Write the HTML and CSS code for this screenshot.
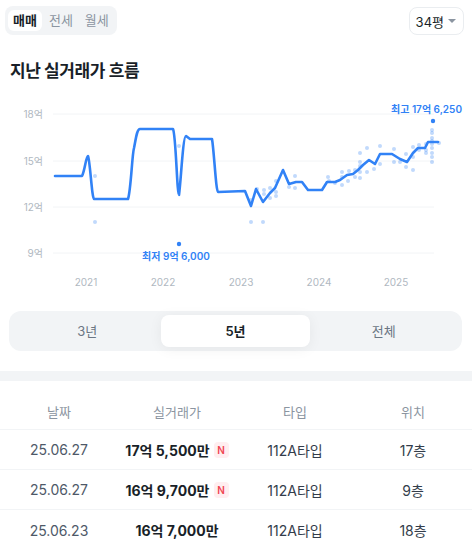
FILE: index.html
```html
<!DOCTYPE html>
<html>
	<head>
		<meta charset="utf-8">
		<title>실거래가</title>
		<link rel="stylesheet" href="styles.css">
	</head>
	<body>
		<div class="top">
			<div class="tabs">
				<span class="tab on">매매</span>
				<span class="tab">전세</span>
				<span class="tab">월세</span>
			</div>
			<div class="size">34평 <i class="caret"></i></div>
		</div>

		<h2 class="title">지난 실거래가 흐름</h2>

		<svg class="chart" width="472" height="200" viewBox="0 95 472 200">
			<g stroke="#f2f4f6" stroke-width="1">
				<line x1="53" y1="114" x2="434" y2="114"/>
				<line x1="53" y1="161" x2="434" y2="161"/>
				<line x1="53" y1="207" x2="434" y2="207"/>
				<line x1="53" y1="253" x2="434" y2="253"/>
			</g>
			<g class="ylab" text-anchor="end">
				<text x="43" y="118">18억</text>
				<text x="43" y="165">15억</text>
				<text x="43" y="211">12억</text>
				<text x="43" y="257">9억</text>
			</g>
			<g class="xlab" text-anchor="middle">
				<text x="86" y="286">2021</text>
				<text x="163" y="286">2022</text>
				<text x="241" y="286">2023</text>
				<text x="319" y="286">2024</text>
				<text x="396" y="286">2025</text>
			</g>
			<g fill="#3182f6" fill-opacity="0.3">
				<circle cx="95" cy="176" r="2"/><circle cx="95" cy="222" r="2"/><circle cx="179" cy="146" r="2"/>
				<circle cx="251" cy="222" r="2"/><circle cx="263" cy="222" r="2"/><circle cx="251" cy="200" r="2"/>
				<circle cx="257" cy="189" r="2"/><circle cx="264" cy="190" r="2"/><circle cx="264" cy="194" r="2"/>
				<circle cx="270" cy="188" r="2"/><circle cx="270" cy="198" r="2"/><circle cx="276" cy="181" r="2"/>
				<circle cx="276" cy="192" r="2"/><circle cx="276" cy="196" r="2"/><circle cx="289" cy="187" r="2"/>
				<circle cx="295" cy="176" r="2"/><circle cx="295" cy="188" r="2"/><circle cx="328" cy="177" r="2"/>
				<circle cx="329" cy="181" r="2"/><circle cx="335" cy="183" r="2"/><circle cx="342" cy="172" r="2"/>
				<circle cx="342" cy="177" r="2"/><circle cx="342" cy="185" r="2"/><circle cx="348" cy="181" r="2"/>
				<circle cx="349" cy="171" r="2"/><circle cx="355" cy="170" r="2"/><circle cx="355" cy="177" r="2"/>
				<circle cx="360" cy="153" r="2"/><circle cx="360" cy="162" r="2"/><circle cx="360" cy="166" r="2"/>
				<circle cx="360" cy="172" r="2"/><circle cx="360" cy="178" r="2"/><circle cx="367" cy="148" r="2"/>
				<circle cx="367" cy="172" r="2"/><circle cx="374" cy="169" r="2"/><circle cx="380" cy="146" r="2"/>
				<circle cx="380" cy="164" r="2"/><circle cx="394" cy="149" r="2"/><circle cx="394" cy="162" r="2"/>
				<circle cx="400" cy="162" r="2"/><circle cx="406" cy="154" r="2"/><circle cx="406" cy="167" r="2"/>
				<circle cx="413" cy="147" r="2"/><circle cx="413" cy="157" r="2"/><circle cx="413" cy="170" r="2"/>
				<circle cx="419" cy="145" r="2"/><circle cx="419" cy="150" r="2"/><circle cx="426" cy="144" r="2"/>
				<circle cx="426" cy="150" r="2"/><circle cx="426" cy="153" r="2"/><circle cx="432" cy="130" r="2"/>
				<circle cx="432" cy="133" r="2"/><circle cx="432" cy="138" r="2"/><circle cx="432" cy="141" r="2"/>
				<circle cx="432" cy="144" r="2"/><circle cx="432" cy="148" r="2"/><circle cx="432" cy="153" r="2"/>
				<circle cx="432" cy="157" r="2"/><circle cx="432" cy="162" r="2"/><circle cx="439" cy="143" r="2"/>
			</g>
			<path fill="none" stroke="#3182f6" stroke-width="2.6" stroke-linejoin="round" stroke-linecap="round"
				d="M55,176 L82,176 C85,170 86,156 88,156 C90,160 92,199 94,199 L128,199 C131,190 132,155 134,148 C136,138 137,129 140,129 L173,129 C176,135 177,195 179,195 C181,180 183,136 186,136 L190,139 L212,139 C214,150 216,192 218,192 L245,191 L251,206 L256,189 L263,202 L270,193 L275,188 L283,170 L289,184 L296,182 L302,182 L308,190 L322,190 L327,182 L335,182 L340,180 L347,175 L353,174 L358,170 L363,165 L369,160 L375,164 L380,154 L392,154 L400,159 L407,162 L413,153 L418,148 L425,148 L428,142 L438,142"/>
			<circle cx="179" cy="244" r="2.2" fill="#3182f6"/>
			<circle cx="433" cy="121" r="2.2" fill="#3182f6"/>
			<text class="mark" x="176" y="260" text-anchor="middle">최저 9억 6,000</text>
			<text class="mark" x="462" y="113" text-anchor="end">최고 17억 6,250</text>
		</svg>

		<div class="seg">
			<span class="seg-item">3년</span>
			<span class="seg-item on">5년</span>
			<span class="seg-item">전체</span>
		</div>

		<div class="band"></div>

		<div class="row head">
			<span>날짜</span>
			<span>실거래가</span>
			<span>타입</span>
			<span>위치</span>
		</div>
		<div class="row">
			<span class="date">25.06.27</span>
			<span class="price">17억 5,500만 <b class="new">N</b></span>
			<span>112A타입</span>
			<span>17층</span>
		</div>
		<div class="row">
			<span class="date">25.06.27</span>
			<span class="price">16억 9,700만 <b class="new">N</b></span>
			<span>112A타입</span>
			<span>9층</span>
		</div>
		<div class="row">
			<span class="date">25.06.23</span>
			<span class="price">16억 7,000만</span>
			<span>112A타입</span>
			<span>18층</span>
		</div>
	</body>
</html>
```
FILE: styles.css
```css
*{margin: 0; padding: 0; box-sizing: border-box;}
body{font-family: Inter, "Noto Sans CJK KR", sans-serif; color: #191f28; background: #fff; width: 472px; overflow: hidden;}

.top{display: flex; justify-content: space-between; align-items: flex-start; padding: 6px 8px 0 5px; height: 34px;}
.tabs{display: flex; gap: 2px; background: #f2f4f6; border-radius: 8px; padding: 4px 3px;}
.tab{font-size: 13px; line-height: 21px; padding: 0 5px; border-radius: 6px; color: #8b95a1;}
.tab.on{background: #fff; color: #191f28; font-weight: 700;}
.size{display: flex; align-items: center; gap: 4px; height: 28px; margin-top: 1px; padding: 0 7px 0 6px; border: 1px solid #eaedf0; border-radius: 8px; font-size: 13px;}
.caret{display: block; width: 0; height: 0; border-left: 4px solid transparent; border-right: 4px solid transparent; border-top: 4px solid #8b95a1;}

.title{font-size: 17px; font-weight: 700; line-height: 24px; margin: 25px 0 12px 10px; letter-spacing: -0.4px;}

.chart{display: block;}
.ylab text, .xlab text{font-size: 10px; fill: #b0b8c1;}
.mark{font-size: 10px; font-weight: 600; fill: #3182f6;}

.seg{display: flex; margin: 16px 10px 0 9px; padding: 4px; height: 40px; background: #f2f4f6; border-radius: 12px;}
.seg-item{flex: 1; text-align: center; font-size: 13px; line-height: 32px; color: #6b7684; border-radius: 8px;}
.seg-item.on{background: #fff; color: #191f28; font-weight: 600; box-shadow: 0 2px 14px rgba(0,0,0,0.06);}

.band{height: 10px; margin-top: 20px; background: #f2f4f6;}

.row{display: grid; grid-template-columns: repeat(4, 1fr); align-items: center; height: 40px; border-bottom: 1px solid #f2f4f6; font-size: 14px; color: #333d4b; text-align: center;}
.row.head{height: 49px; padding-top: 13px; align-items: center; font-size: 13px; color: #8b95a1;}
.row:last-child{border-bottom: none;}
.date{color: #4e5968;}
.price{font-weight: 700; color: #191f28; display: flex; justify-content: center; align-items: center; gap: 4px;}
.new{display: inline-block; width: 15px; height: 16px; line-height: 16px; border-radius: 4px; background: #ffeef0; color: #f04452; font-size: 10px; font-weight: 600; text-align: center;}
```
